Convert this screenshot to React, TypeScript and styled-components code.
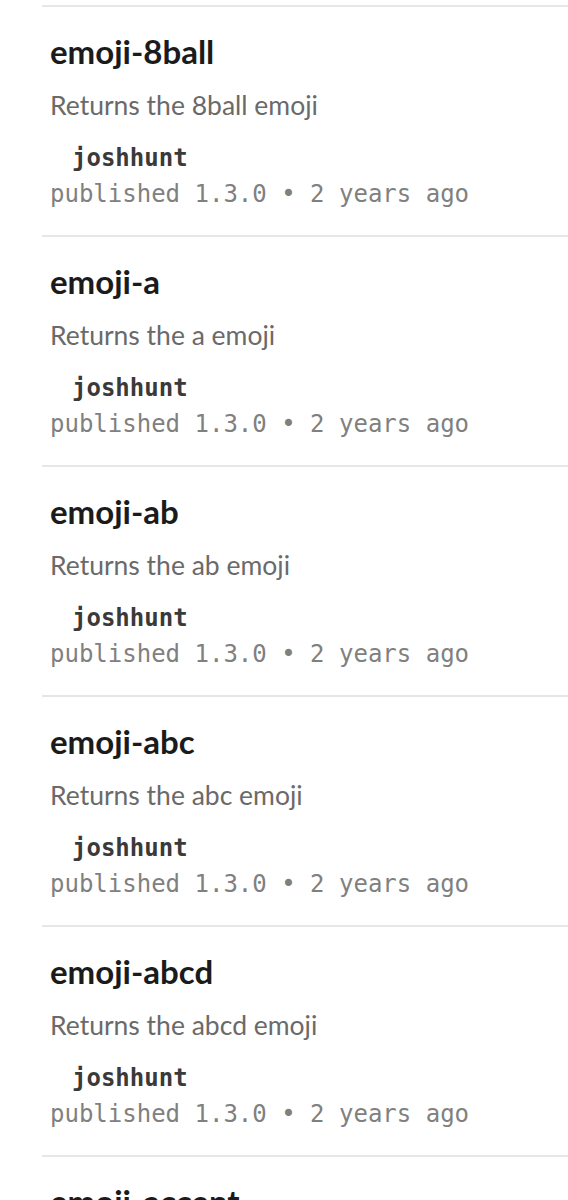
import React from "react";
import styled, { createGlobalStyle } from "styled-components";

interface Pkg {
  name: string;
  description: string;
  publisher: string;
  version: string;
  date: string;
}

const packages: Pkg[] = [
  { name: "emoji-8ball", description: "Returns the 8ball emoji", publisher: "joshhunt", version: "1.3.0", date: "2 years ago" },
  { name: "emoji-a", description: "Returns the a emoji", publisher: "joshhunt", version: "1.3.0", date: "2 years ago" },
  { name: "emoji-ab", description: "Returns the ab emoji", publisher: "joshhunt", version: "1.3.0", date: "2 years ago" },
  { name: "emoji-abc", description: "Returns the abc emoji", publisher: "joshhunt", version: "1.3.0", date: "2 years ago" },
  { name: "emoji-abcd", description: "Returns the abcd emoji", publisher: "joshhunt", version: "1.3.0", date: "2 years ago" },
  { name: "emoji-accent", description: "Returns the accent emoji", publisher: "joshhunt", version: "1.3.0", date: "2 years ago" }
];

export default function App() {
  return (
    <>
      <GlobalStyle />
      <List>
        {packages.map(p => (
          <Item key={p.name}>
            <Name>{p.name}</Name>
            <Description>{p.description}</Description>
            <Publisher>{p.publisher}</Publisher>
            <Meta>
              published {p.version} • {p.date}
            </Meta>
          </Item>
        ))}
      </List>
    </>
  );
}

const GlobalStyle = createGlobalStyle`
  html, body {
    margin: 0;
    padding: 0;
    background: #fff;
    height: 1200px;
    overflow: hidden;
  }
`;

const List = styled.ul`
  list-style: none;
  margin: 0;
  padding: 5px 0 0 42px;
`;

const Item = styled.li`
  border-top: 2px solid #e6e6e6;
  padding: 24px 0 0 8px;
  height: 204px;
`;

const Name = styled.h3`
  margin: 0;
  font-family: Lato, "Liberation Sans", sans-serif;
  font-size: 33px;
  font-weight: 700;
  line-height: 40px;
  color: #1b1b1b;
`;

const Description = styled.p`
  margin: 18px 0 0;
  font-family: Lato, "Liberation Sans", sans-serif;
  font-size: 26.5px;
  line-height: 32px;
  color: #6a6a6a;
`;

const Publisher = styled.div`
  margin: 21px 0 0 22px;
  font-family: "DejaVu Sans Mono", "Liberation Mono", monospace;
  font-size: 24px;
  font-weight: 700;
  line-height: 32px;
  color: #3a3a3a;
`;

const Meta = styled.div`
  margin: 4px 0 0;
  font-family: "DejaVu Sans Mono", "Liberation Mono", monospace;
  font-size: 24px;
  line-height: 32px;
  color: #808080;
`;
